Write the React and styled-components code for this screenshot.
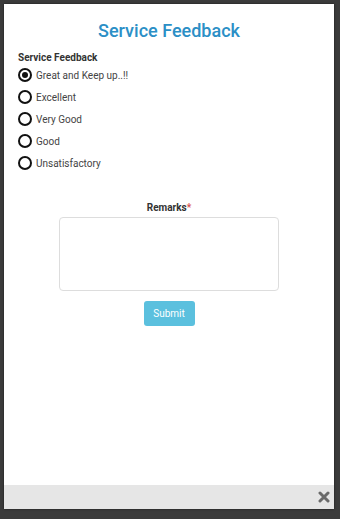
import React from 'react';
import styled, { createGlobalStyle } from 'styled-components';

const Global = createGlobalStyle`
  html, body { margin: 0; padding: 0; background: #3b3b3b; }
  body { font-family: Roboto, "Liberation Sans", sans-serif; }
`;

const Frame = styled.div`
  width: 340px;
  height: 519px;
  box-sizing: border-box;
  padding: 4px 6px 10px 4px;
  background: #3b3b3b;
  display: flex;
`;

const Modal = styled.div`
  flex: 1;
  background: #fff;
  display: flex;
  flex-direction: column;
  box-shadow: 0 0 2px rgba(0,0,0,.6);
`;

const Body = styled.div`
  flex: 1;
  padding: 15px 14px 0 14px;
`;

const Title = styled.h1`
  margin: 0 0 9px 0;
  text-align: center;
  font-size: 18px;
  font-weight: 500;
  color: #2b8fc6;
  line-height: 24px;
`;

const GroupLabel = styled.div`
  font-size: 10px;
  font-weight: 700;
  color: #333;
  margin-bottom: 5px;
`;

const Options = styled.div`
  display: flex;
  flex-direction: column;
  gap: 8px;
`;

const Option = styled.label`
  display: flex;
  align-items: center;
  gap: 4px;
  font-size: 10px;
  color: #444;
  height: 14px;
`;

const Radio = styled.span`
  width: 10px;
  height: 10px;
  border: 2px solid #111;
  border-radius: 50%;
  display: flex;
  align-items: center;
  justify-content: center;
  &::after {
    content: '';
    width: 6px;
    height: 6px;
    border-radius: 50%;
    background: ${p => (p.$checked ? '#111' : 'transparent')};
  }
`;

const Remarks = styled.div`
  margin-top: 32px;
  display: flex;
  flex-direction: column;
  align-items: center;
`;

const RemarksLabel = styled.div`
  font-size: 10px;
  font-weight: 700;
  color: #333;
  margin-bottom: 4px;
  span { color: #d9534f; }
`;

const TextArea = styled.div`
  width: 220px;
  height: 74px;
  box-sizing: border-box;
  border: 1px solid #ddd;
  border-radius: 4px;
`;

const Button = styled.button`
  margin-top: 10px;
  width: 51px;
  height: 25px;
  border: none;
  border-radius: 3px;
  background: #5bc0de;
  color: #fff;
  font-family: inherit;
  font-size: 10px;
  padding: 0;
`;

const Footer = styled.div`
  height: 24px;
  background: #e6e6e6;
  display: flex;
  justify-content: flex-end;
  align-items: center;
  padding-right: 4px;
`;

const options = ['Great and Keep up..!!', 'Excellent', 'Very Good', 'Good', 'Unsatisfactory'];

export default function App() {
  return (
    <Frame>
      <Global />
      <Modal>
        <Body>
          <Title>Service Feedback</Title>
          <GroupLabel>Service Feedback</GroupLabel>
          <Options>
            {options.map((o, i) => (
              <Option key={o}>
                <Radio $checked={i === 0} />
                {o}
              </Option>
            ))}
          </Options>
          <Remarks>
            <RemarksLabel>Remarks<span>*</span></RemarksLabel>
            <TextArea />
            <Button>Submit</Button>
          </Remarks>
        </Body>
        <Footer>
          <svg width="12" height="12" viewBox="0 0 12 12">
            <path d="M2 2 L10 10 M10 2 L2 10" stroke="#6a6a6a" strokeWidth="3" strokeLinecap="round" />
          </svg>
        </Footer>
      </Modal>
    </Frame>
  );
}
